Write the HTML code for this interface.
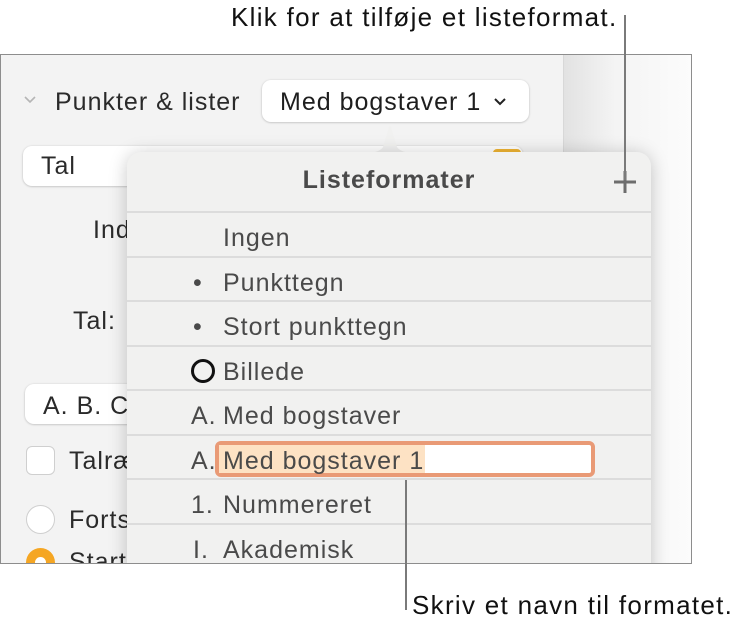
<!DOCTYPE html>
<html><head><meta charset="utf-8"><style>
*{margin:0;padding:0;box-sizing:border-box}
body{width:750px;height:633px;background:#fff;position:relative;overflow:hidden;font-family:"Liberation Sans",sans-serif;color:#222}
.abs{position:absolute}
.frame{left:0;top:54px;width:692px;height:510px;border:1.5px solid #8d8d8d;overflow:hidden;background:#f3f3f3}
.right{left:562px;top:0;width:130px;height:510px;background:linear-gradient(90deg,#e2e2e2,#f4f4f4 40%,#fcfcfc);border-left:1px solid #d8d8d8}
.t{font-size:25px;letter-spacing:1px;color:#2a2a2a;white-space:nowrap}
.c{font-size:26px;letter-spacing:1.3px;color:#111;white-space:nowrap}
.field{background:#fff;border-radius:9px;box-shadow:0 0.5px 2px rgba(0,0,0,.25)}
.pop{left:126px;top:97px;width:524px;height:440px;background:#f1f1f0;border-radius:14px;box-shadow:0 2px 18px rgba(0,0,0,.22)}
.row{position:absolute;left:0;width:524px;height:45px;border-top:2px solid #dcdcdc}
.row span{position:absolute;top:11px;font-size:25px;letter-spacing:1px;color:#4a4a4a;white-space:nowrap;line-height:29px}
.pre{left:64px}.lab{left:96px}
.line{background:#7a7a7a;width:2px}
</style></head><body>
<div class="abs c" style="left:231px;top:2px">Klik for at tilføje et listeformat.</div>
<div class="abs c" style="left:412px;top:590px">Skriv et navn til formatet.</div>
<div class="abs frame">
  <div class="abs right"></div>
  <svg class="abs" style="left:22px;top:40px" width="14" height="10"><path d="M2 2 L7 7 L12 2" stroke="#b5b5b5" stroke-width="1.6" fill="none"/></svg>
  <div class="abs t" style="left:54px;top:33px">Punkter &amp; lister</div>
  <div class="abs field" style="left:261px;top:25px;width:267px;height:42px"></div>
  <div class="abs t" style="left:279px;top:33px;color:#1e1e1e">Med bogstaver 1</div>
  <svg class="abs" style="left:492px;top:42px" width="14" height="10"><path d="M2 2 L7 7 L12 2" stroke="#222" stroke-width="2" fill="none"/></svg>
  <div class="abs field" style="left:22px;top:91px;width:500px;height:40px"></div>
  <div class="abs" style="left:492px;top:94px;width:28px;height:8px;background:#f0b533;border-radius:4px"></div>
  <div class="abs t" style="left:40px;top:97px">Tal</div>
  <div class="abs t" style="left:92px;top:161px">Ind</div>
  <div class="abs t" style="left:72px;top:252px">Tal:</div>
  <div class="abs field" style="left:24px;top:329px;width:140px;height:40px"></div>
  <div class="abs t" style="left:42px;top:337px">A. B. C.</div>
  <div class="abs" style="left:25px;top:391px;width:29px;height:29px;background:#fff;border:1px solid #cfcfcf;border-radius:6px"></div>
  <div class="abs t" style="left:68px;top:392px">Talræ</div>
  <div class="abs" style="left:25px;top:450px;width:29px;height:29px;background:#fff;border:1px solid #cfcfcf;border-radius:50%"></div>
  <div class="abs t" style="left:68px;top:451px">Forts</div>
  <div class="abs" style="left:25px;top:493px;width:29px;height:29px;background:#f5a623;border-radius:50%"><div style="margin:9px;width:11px;height:11px;background:#fff;border-radius:50%"></div></div>
  <div class="abs t" style="left:68px;top:493px">Start</div>
  <svg class="abs" style="left:354px;top:68px" width="70" height="32"><path d="M0 31 Q24 31 28 24 L34 4 Q35 1 36 4 L42 24 Q46 31 70 31 Z" fill="#f1f1f0"/></svg>
  <div class="abs pop">
    <div class="abs" style="left:0;top:14px;width:524px;text-align:center;font-size:25px;letter-spacing:1px;font-weight:bold;color:#4a4a4a">Listeformater</div>
    <svg class="abs" style="left:486px;top:18px" width="24" height="24"><path d="M12 1V23M1 12H23" stroke="#6d6d6d" stroke-width="3"/></svg>
    <div class="row" style="top:59px"><span class="lab">Ingen</span></div>
    <div class="row" style="top:103.5px"><span class="pre" style="left:66px">•</span><span class="lab">Punkttegn</span></div>
    <div class="row" style="top:148px"><span class="pre" style="left:66px">•</span><span class="lab">Stort punkttegn</span></div>
    <div class="row" style="top:192.5px"><span style="left:64px;top:12px;width:24px;height:24px;border:3.5px solid #111;border-radius:50%"></span><span class="lab">Billede</span></div>
    <div class="row" style="top:237px"><span class="pre">A.</span><span class="lab">Med bogstaver</span></div>
    <div class="row" style="top:281.5px"><span class="pre">A.</span>
      <div class="abs" style="left:88px;top:5px;width:380px;height:36px;border:4px solid #e99a76;border-radius:6px;background:#fff"><div style="position:absolute;left:0;top:0;width:206px;height:28px;background:#fde2c4"></div></div>
      <span class="lab">Med bogstaver 1</span></div>
    <div class="row" style="top:326px"><span class="pre">1.</span><span class="lab">Nummereret</span></div>
    <div class="row" style="top:370.5px"><span class="pre" style="left:66px">I.</span><span class="lab">Akademisk</span></div>
  </div>
</div>
<div class="abs line" style="left:624px;top:15px;height:165px"></div>
<div class="abs line" style="left:405px;top:480px;height:130px"></div>
</body></html>
